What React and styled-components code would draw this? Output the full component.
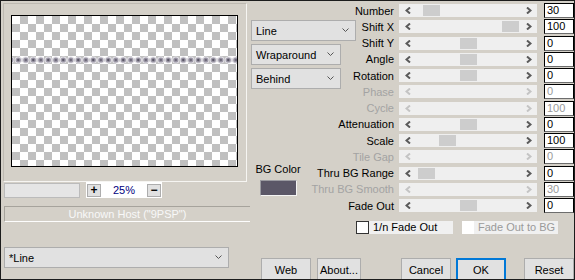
import styled, { createGlobalStyle } from "styled-components";

const GlobalStyle = createGlobalStyle`
  html, body {
    margin: 0;
    padding: 0;
    background: #d4d0c8;
  }
  body {
    font-family: "Liberation Sans", Arial, sans-serif;
    font-size: 11px;
    color: #000;
  }
  * {
    box-sizing: border-box;
  }
`;

const params = [
  { label: "Number", value: "30", pos: 7 },
  { label: "Shift X", value: "100", pos: 86 },
  { label: "Shift Y", value: "0", pos: 44 },
  { label: "Angle", value: "0", pos: 44 },
  { label: "Rotation", value: "0", pos: 44 },
  { label: "Phase", value: "0", disabled: true },
  { label: "Cycle", value: "100", disabled: true },
  { label: "Attenuation", value: "0", pos: 44 },
  { label: "Scale", value: "100", pos: 23 },
  { label: "Tile Gap", value: "0", disabled: true },
  { label: "Thru BG Range", value: "0", pos: 2 },
  { label: "Thru BG Smooth", value: "30", disabled: true },
  { label: "Fade Out", value: "0", pos: 44 },
];

const Chevron = ({ dir = "down", disabled }) => {
  if (dir === "down") {
    return (
      <svg width="7" height="5" viewBox="0 0 7 5">
        <polyline points="0.5,0.5 3.5,3.5 6.5,0.5" fill="none" stroke="#555" strokeWidth="1" />
      </svg>
    );
  }
  const pts = dir === "left" ? "5,0.5 1.5,3.5 5,6.5" : "1,0.5 4.5,3.5 1,6.5";
  return (
    <svg width="6" height="7" viewBox="0 0 6 7">
      <polyline points={pts} fill="none" stroke={disabled ? "#c4c4c4" : "#5a5a5a"} strokeWidth="2" />
    </svg>
  );
};

const LinePreview = () => {
  const dots = Array.from({ length: 31 }, (_, i) => -1.2 + 7.5 * i);
  return (
    <svg width="225" height="150" viewBox="0 0 225 150">
      <rect x="0" y="42.5" width="225" height="3" fill="#b9b7be" />
      {dots.map((x, i) => (
        <g key={i}>
          <circle cx={x} cy="44" r="3.6" fill="#e4e2e8" />
          <circle cx={x} cy="44" r="2.6" fill="#9d99a7" />
          <circle cx={x} cy="44" r="1.2" fill={i % 2 ? "#5c5868" : "#6e6a7a"} />
        </g>
      ))}
    </svg>
  );
};

const App = () => {
  return (
    <>
      <GlobalStyle />
      <Window>
        <LeftPane>
          <PreviewFrame>
            <Preview>
              <LinePreview />
            </Preview>
          </PreviewFrame>
          <ZoomRow>
            <BlankField />
            <ZoomBox>
              <TinyButton>+</TinyButton>
              <ZoomValue>25%</ZoomValue>
              <TinyButton>−</TinyButton>
            </ZoomBox>
          </ZoomRow>
          <HostBar>Unknown Host ("9PSP")</HostBar>
          <Select $width={225} $top={25} $left={3}>
            <span>*Line</span>
            <Chevron />
          </Select>
        </LeftPane>

        <RightSide>
          <UpperRow>
            <MidPane>
              <Select $width={105}>
                <span>Line</span>
                <Chevron />
              </Select>
              <Select $width={90}>
                <span>Wraparound</span>
                <Chevron />
              </Select>
              <Select $width={90}>
                <span>Behind</span>
                <Chevron />
              </Select>
              <BGColor>
                <span>BG Color</span>
                <Swatch />
              </BGColor>
            </MidPane>

            <ParamGrid>
              {params.map((p) => (
                <ParamRow key={p.label}>
                  <ParamLabel $disabled={p.disabled}>{p.label}</ParamLabel>
                  <Slider>
                    <ArrowBox>
                      <Chevron dir="left" disabled={p.disabled} />
                    </ArrowBox>
                    <Channel>
                      {!p.disabled && <Thumb style={{ left: p.pos }} />}
                    </Channel>
                    <ArrowBox>
                      <Chevron dir="right" disabled={p.disabled} />
                    </ArrowBox>
                  </Slider>
                  <NumberBox $disabled={p.disabled}>{p.value}</NumberBox>
                </ParamRow>
              ))}
            </ParamGrid>
          </UpperRow>

          <CheckRow>
            <CheckBox />
            <CheckLabel>1/n Fade Out</CheckLabel>
            <CheckBox $disabled />
            <CheckLabel $disabled>Fade Out to BG</CheckLabel>
          </CheckRow>

          <ButtonRow>
            <Button $width={50} $gap={11}>Web</Button>
            <Button $width={44} $gap={6}>About...</Button>
            <Button $width={50} $gap={40}>Cancel</Button>
            <Button $width={50} $gap={5} $default>OK</Button>
            <Button $width={50} $gap={18}>Reset</Button>
          </ButtonRow>
        </RightSide>
      </Window>
    </>
  );
};

const Window = styled.div`
  width: 575px;
  height: 280px;
  border: 1px solid #1c1c1c;
  background: #d4d0c8;
  display: flex;
  overflow: hidden;
`;

const LeftPane = styled.div`
  width: 249px;
  display: flex;
  flex-direction: column;
  align-items: flex-start;
`;

const PreviewFrame = styled.div`
  margin: 2px 0 0 2px;
  width: 244px;
  height: 179px;
  border: 1px solid;
  border-color: #bdb9b1 #f6f5f2 #f6f5f2 #bdb9b1;
  padding: 11px 0 0 7px;
`;

const Preview = styled.div`
  width: 227px;
  height: 152px;
  border: 1px solid #000;
  background: repeating-conic-gradient(#c0c0c0 0 25%, #ffffff 0 50%) 0 0 / 16px 16px;
  svg {
    display: block;
  }
`;

const ZoomRow = styled.div`
  display: flex;
  align-items: flex-start;
  margin-left: 3px;
  gap: 6px;
`;

const BlankField = styled.div`
  width: 76px;
  height: 15px;
  margin-top: 1px;
  background: #e5e5e5;
  border: 1px solid #bbb;
`;

const ZoomBox = styled.div`
  width: 76px;
  height: 16px;
  background: #fff;
  display: flex;
  align-items: center;
  padding: 0 1px;
`;

const TinyButton = styled.div`
  width: 14px;
  height: 13px;
  background: #e1e1e1;
  border: 1px solid #adadad;
  display: flex;
  align-items: center;
  justify-content: center;
  font-weight: bold;
  font-size: 12px;
  line-height: 1;
`;

const ZoomValue = styled.span`
  flex: 1;
  text-align: center;
  color: #000080;
  font-size: 11px;
`;

const HostBar = styled.div`
  margin: 8px 0 0 3px;
  width: 246px;
  height: 16px;
  border-top: 1px solid #a6a39c;
  border-left: 1px solid #a6a39c;
  border-bottom: 1px solid #fdfdfd;
  color: #f8f8f8;
  text-align: center;
  line-height: 14px;
`;

const Select = styled.div`
  width: ${({ $width }) => $width}px;
  height: 21px;
  margin-top: ${({ $top = 0 }) => $top}px;
  margin-left: ${({ $left = 1 }) => $left}px;
  background: #e1e1e1;
  border: 1px solid #adadad;
  display: flex;
  align-items: center;
  justify-content: space-between;
  padding: 0 6px 0 4px;
  svg {
    display: block;
  }
`;

const RightSide = styled.div`
  flex: 1;
  display: flex;
  flex-direction: column;
`;

const UpperRow = styled.div`
  display: flex;
  height: 212.75px;
`;

const MidPane = styled.div`
  width: 106px;
  padding-top: 19px;
  display: flex;
  flex-direction: column;
  gap: 3px;
`;

const BGColor = styled.div`
  margin: 71px 0 0 4px;
  display: flex;
  flex-direction: column;
  align-items: center;
  width: 48px;
  gap: 4px;
  white-space: nowrap;
  line-height: 13px;
`;

const Swatch = styled.div`
  width: 37px;
  height: 16px;
  background: #5b5767;
  border: 1px solid;
  border-color: #9a9aa0 #f4f4f4 #f4f4f4 #9a9aa0;
`;

const ParamGrid = styled.div`
  padding-top: 1.5px;
  display: grid;
  grid-auto-rows: 16.25px;
`;

const ParamRow = styled.div`
  display: grid;
  grid-template-columns: 43px 145px 30px;
  align-items: center;
`;

const ParamLabel = styled.div`
  display: flex;
  justify-content: flex-end;
  white-space: nowrap;
  padding-right: 5px;
  color: ${({ $disabled }) => ($disabled ? "#a3a3a3" : "#000")};
`;

const Slider = styled.div`
  width: 138px;
  height: 13px;
  background: #efefef;
  display: flex;
`;

const ArrowBox = styled.div`
  width: 17px;
  display: flex;
  align-items: center;
  justify-content: center;
  svg {
    display: block;
  }
`;

const Channel = styled.div`
  flex: 1;
  position: relative;
`;

const Thumb = styled.div`
  position: absolute;
  top: 1px;
  width: 17px;
  height: 11px;
  background: #cdcdcd;
`;

const NumberBox = styled.div`
  width: 30px;
  height: 15px;
  background: #fff;
  border: 1px solid;
  border-color: #000 #000 #6d6d6d #000;
  padding-left: 2px;
  line-height: 13px;
  color: ${({ $disabled }) => ($disabled ? "#9a9a9a" : "#000")};
`;

const CheckRow = styled.div`
  display: flex;
  align-items: center;
  margin: 7.25px 0 0 106px;
  height: 13px;
`;

const CheckBox = styled.div`
  width: ${({ $disabled }) => ($disabled ? 12 : 13)}px;
  height: 13px;
  margin-left: ${({ $disabled }) => ($disabled ? 9 : 0)}px;
  background: #fff;
  border: ${({ $disabled }) => ($disabled ? "none" : "1px solid #333")};
`;

const CheckLabel = styled.div`
  width: 84px;
  height: 13px;
  background: #f0f0f0;
  padding-left: 4px;
  line-height: 13px;
  white-space: nowrap;
  color: ${({ $disabled }) => ($disabled ? "#9a9a9a" : "#000")};
`;

const ButtonRow = styled.div`
  display: flex;
  margin-top: 24px;
`;

const Button = styled.div`
  width: ${({ $width }) => $width}px;
  height: 23px;
  margin-left: ${({ $gap }) => $gap}px;
  background: #e1e1e1;
  border: ${({ $default }) => ($default ? "2px solid #0078d7" : "1px solid #adadad")};
  display: flex;
  align-items: center;
  justify-content: center;
  flex-shrink: 0;
`;

export default App;
